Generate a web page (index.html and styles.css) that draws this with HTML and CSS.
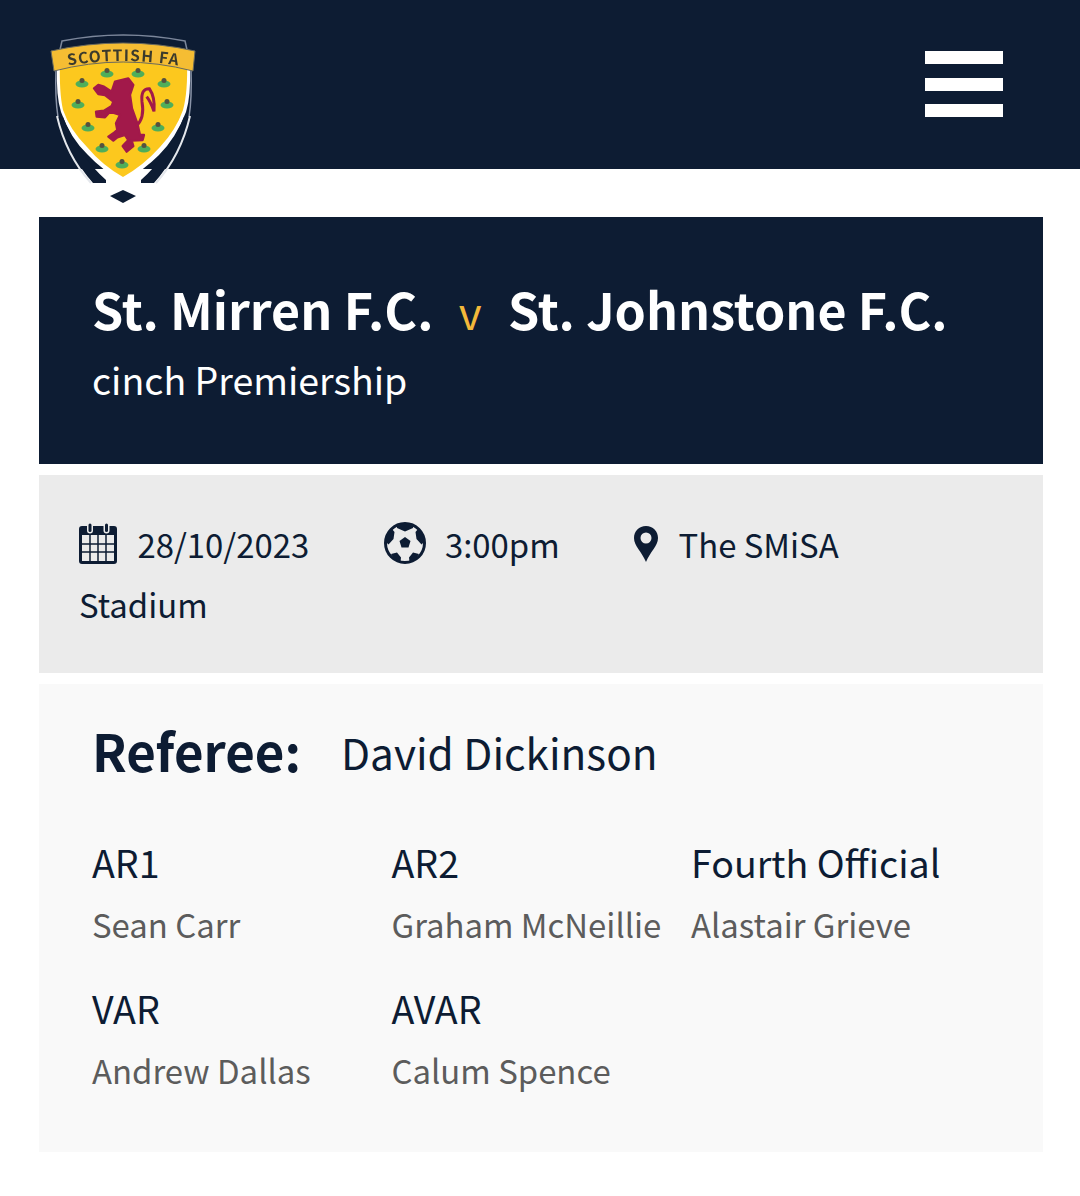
FILE: index.html
```html
<!DOCTYPE html>
<html lang="en">
  <head>
    <meta charset="UTF-8" />
    <title>Match officials</title>
    <link rel="stylesheet" href="styles.css">
  </head>
  <body>
    <header class="site-header">
      <svg class="crest" viewBox="0 0 190 190">
        <!-- backing arc and thin side lines on the navy -->
        <path d="M32 21 Q93 9 155 21 L158 34 L29 34 Z" fill="#0d1c33" stroke="#7c879b" stroke-width="1.500"/>
        <path d="M26 50 Q25 78 28 97 M161 50 Q162 78 159 97" fill="none" stroke="#8a94a8" stroke-width="1.500"/>
        <!-- white edge of the shield, then navy swooshes -->
        <path d="M27 48 Q26 76 31 92 Q40 118 58 135 Q72 150 93 162 Q114 150 129 135 Q146 118 156 92 Q161 76 160 48 Z" fill="#fff"/>
        <path d="M29 97 Q38 135 63 163 L76 163 L76 160 Q48 135 33 97 Z" fill="#0d1c33"/>
        <path d="M158 97 Q149 135 124 163 L111 163 L111 160 Q139 135 154 97 Z" fill="#0d1c33"/>
        <path d="M27 96 Q36 135 61 163 M160 96 Q151 135 126 163" fill="none" stroke="#e4e7ec" stroke-width="2"/>
        <path d="M80 176 L93 170 L106 176 L93 183 Z" fill="#0d1c33"/>
        <!-- yellow field -->
        <path d="M30 40 L157 40 Q158 72 153 90 Q146 110 130 127 Q114 145 93 157 Q72 145 57 127 Q40 110 33 90 Q29 72 30 40 Z" fill="#fcc81e"/>
        <!-- thistles -->
        <g fill="#4fae5a">
          <ellipse cx="77" cy="54" rx="6.500" ry="3.500"/><ellipse cx="108" cy="54" rx="6.500" ry="3.500"/>
          <ellipse cx="52" cy="64" rx="6.500" ry="3.500"/><ellipse cx="134" cy="64" rx="6.500" ry="3.500"/>
          <ellipse cx="48" cy="85" rx="6.500" ry="3.500"/><ellipse cx="137" cy="85" rx="6.500" ry="3.500"/>
          <ellipse cx="58" cy="108" rx="6.500" ry="3.500"/><ellipse cx="128" cy="108" rx="6.500" ry="3.500"/>
          <ellipse cx="72" cy="129" rx="6.500" ry="3.500"/><ellipse cx="114" cy="129" rx="6.500" ry="3.500"/>
          <ellipse cx="92" cy="145" rx="6.500" ry="3.500"/>
        </g>
        <g fill="#55523f">
          <circle cx="77" cy="50.500" r="2.500"/><circle cx="108" cy="50.500" r="2.500"/>
          <circle cx="52" cy="60.500" r="2.500"/><circle cx="134" cy="60.500" r="2.500"/>
          <circle cx="48" cy="81.500" r="2.500"/><circle cx="137" cy="81.500" r="2.500"/>
          <circle cx="58" cy="104.500" r="2.500"/><circle cx="128" cy="104.500" r="2.500"/>
          <circle cx="72" cy="125.500" r="2.500"/><circle cx="114" cy="125.500" r="2.500"/>
          <circle cx="92" cy="141.500" r="2.500"/>
        </g>
        <!-- lion, drawn at 3x -->
        <g transform="scale(0.3333)">
          <path d="M255 185 L295 175 L310 195 L300 225 L306 265 L322 310 L330 345 L342 345 L338 360 L305 362 L310 378 L290 395 L278 378 L295 360 L285 345 L262 352 L250 362 L235 350 L250 340 L262 330 L258 310 L270 285 L240 275 L225 292 L200 290 L198 275 L222 272 L245 258 L250 245 L225 225 L205 222 L192 205 L205 195 L222 200 L245 215 Z" fill="#a2194a" stroke="#a2194a" stroke-width="7" stroke-linejoin="round"/>
          <path d="M318 318 Q345 295 336 245 Q332 205 358 206 Q376 232 372 274 Q362 245 350 230" fill="none" stroke="#a2194a" stroke-width="9"/>
        </g>
        <!-- scroll -->
        <path d="M21 31 Q93 15 165 31 L163 51 Q93 33 24 51 Z" fill="#f5bd33" stroke="#6b6a5c" stroke-width="1"/>
        <path id="scroll-line" d="M30 47 Q93 35 157 47" fill="none"/>
        <text class="crest-text"><textPath href="#scroll-line" startOffset="50%" text-anchor="middle">SCOTTISH FA</textPath></text>
      </svg>
      <button class="menu-btn">
        <span class="menu-bar"></span>
        <span class="menu-bar"></span>
        <span class="menu-bar"></span>
      </button>
    </header>

    <main class="match">
      <section class="fixture">
        <h1 class="teams">St. Mirren F.C. <span class="versus">v</span> St. Johnstone F.C.</h1>
        <p class="competition">cinch Premiership</p>
      </section>

      <section class="details">
        <svg class="icon icon-date" viewBox="0 0 38 42">
          <path fill-rule="evenodd" d="M3 4 H35 Q38 4 38 7 V39 Q38 42 35 42 H3 Q0 42 0 39 V7 Q0 4 3 4 Z M3 13 V39 H35 V13 Z" fill="#0d1c33"/>
          <path d="M3 22 H35 M3 30 H35 M11 13 V39 M19 13 V39 M27 13 V39" stroke="#0d1c33" stroke-width="1.500" fill="none"/>
          <rect x="8" y="0.500" width="6" height="11" rx="3" fill="#ebebeb"/>
          <rect x="24.500" y="0.500" width="6" height="11" rx="3" fill="#ebebeb"/>
          <rect x="9.500" y="1.500" width="3" height="8.500" rx="1.500" fill="#0d1c33"/>
          <rect x="26" y="1.500" width="3" height="8.500" rx="1.500" fill="#0d1c33"/>
        </svg>
        <span class="detail-text detail-date">28/10/2023</span>
        <svg class="icon icon-time" viewBox="0 0 42 42">
          <circle cx="21" cy="21" r="19.500" fill="#ebebeb" stroke="#0d1c33" stroke-width="3"/>
          <path d="M21 15 L26.500 19 L24.500 25.500 H17.500 L15.500 19 Z M13 2 Q21 0 29 2 L29 6 L21 9.500 L13 6 Z M2 20 Q3 12 8 7 L10.500 10 L9.500 17 L4.500 22.500 Z M40 20 Q39 12 34 7 L31.500 10 L32.500 17 L37.500 22.500 Z M7 32 L13 30.500 L17 35.500 L16.500 40 Q10 38 7 32 Z M35 32 L29 30.500 L25 35.500 L25.500 40 Q32 38 35 32 Z" fill="#0d1c33"/>
        </svg>
        <span class="detail-text detail-time">3:00pm</span>
        <svg class="icon icon-pin" viewBox="0 0 24 36">
          <path fill-rule="evenodd" d="M12 0 C5 0 0 5 0 12 C0 20 8 26 12 36 C16 26 24 20 24 12 C24 5 19 0 12 0 Z M12 6.500 A5.500 5.500 0 1 1 12 17.500 A5.500 5.500 0 1 1 12 6.500 Z" fill="#0d1c33"/>
        </svg>
        <span class="detail-text">The SMiSA</span> <span class="detail-text">Stadium</span>
      </section>

      <section class="officials">
        <div class="referee">
          <h2 class="referee-label">Referee:</h2>
          <span class="referee-name">David Dickinson</span>
        </div>
        <div class="official-grid">
          <div class="official"><h3 class="role">AR1</h3><p class="person">Sean Carr</p></div>
          <div class="official"><h3 class="role">AR2</h3><p class="person">Graham McNeillie</p></div>
          <div class="official"><h3 class="role">Fourth Official</h3><p class="person">Alastair Grieve</p></div>
          <div class="official"><h3 class="role">VAR</h3><p class="person">Andrew Dallas</p></div>
          <div class="official"><h3 class="role">AVAR</h3><p class="person">Calum Spence</p></div>
        </div>
      </section>
    </main>
  </body>
</html>
```

FILE: styles.css
```css
body {
  margin: 0;
  background-color: #fff;
  color: #0d1c33;
  font-family: "Noto Sans CJK SC", "Noto Sans", sans-serif;
}
h1,
h2,
h3,
p {
  margin: 0;
  font-weight: 400;
}

.site-header {
  position: relative;
  height: 169px;
  background-color: #0d1c33;
  display: flex;
  justify-content: flex-end;
  padding: 51px 77px 0 0;
  box-sizing: border-box;
}
.crest {
  position: absolute;
  left: 30px;
  top: 20px;
  width: 190px;
  height: 190px;
  filter: blur(0.4px);
}
.crest-text {
  font-size: 15.5px;
  font-weight: 700;
  letter-spacing: 1.2px;
  fill: #3b3a2c;
}
.menu-btn {
  width: 78px;
  height: 66px;
  padding: 0;
  background: transparent;
  border: none;
  display: flex;
  flex-direction: column;
  justify-content: space-between;
}
.menu-bar {
  height: 13px;
  background-color: #fff;
}

.match {
  width: 1004px;
  margin: 48px 0 0 39px;
  display: flex;
  flex-direction: column;
  gap: 11px;
}

.fixture {
  height: 247px;
  box-sizing: border-box;
  padding: 58px 53px 0;
  background-color: #0d1c33;
  color: #fff;
}
.teams {
  font-size: 50.1px;
  font-weight: 700;
  line-height: 66px;
  white-space: nowrap;
}
.versus {
  margin: 0 15px 0 14px;
  font-size: 44px;
  font-weight: 400;
  color: #f3b83a;
}
.competition {
  margin-top: 10px;
  font-size: 37.5px;
  line-height: 50px;
}

.details {
  height: 198px;
  box-sizing: border-box;
  padding: 39px 140px 0 40px;
  background-color: #ebebeb;
  font-size: 32.9px;
  line-height: 60px;
}
.icon {
  vertical-align: -6px;
}
.icon-date {
  width: 38px;
  height: 42px;
  margin-right: 13px;
}
.icon-time {
  width: 42px;
  height: 42px;
  margin-right: 12px;
}
.icon-pin {
  width: 24px;
  height: 36px;
  margin-right: 13px;
  vertical-align: -4px;
}
.detail-date {
  margin-right: 67px;
}
.detail-time {
  margin-right: 67px;
}

.officials {
  height: 468px;
  box-sizing: border-box;
  padding: 33px 53px 0;
  background-color: #f9f9f9;
}
.referee {
  display: flex;
  align-items: center;
  gap: 40px;
}
.referee-label {
  font-size: 51px;
  font-weight: 700;
  line-height: 66px;
}
.referee-name {
  padding-top: 2px;
  font-size: 42.3px;
}
.official-grid {
  margin-top: 54px;
  display: grid;
  grid-template-columns: repeat(3, 299.5px);
  row-gap: 35px;
}
.role {
  font-size: 37.6px;
  line-height: 50px;
}
.person {
  margin-top: 13px;
  font-size: 32.9px;
  line-height: 48px;
  color: #5c5c5c;
}
```
